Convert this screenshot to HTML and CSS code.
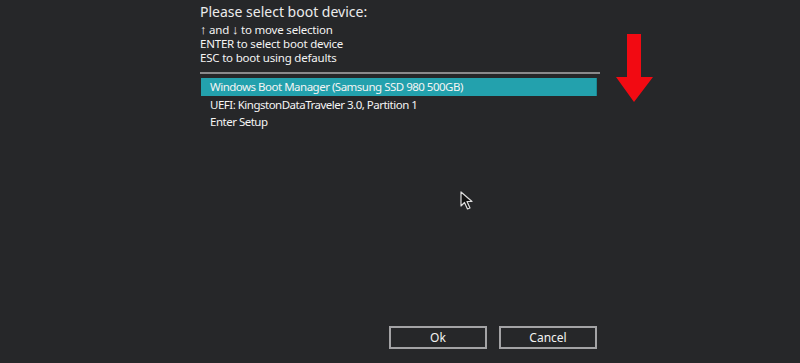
FILE: index.html
```html
<!DOCTYPE html>
<html lang="en">
<head>
    <meta charset="UTF-8">
    <meta name="viewport" content="width=device-width, initial-scale=1.0">
    <title>Boot Menu</title>
    <link rel="stylesheet" href="styles.css">
</head>
<body>
    <div class="screen">
        <div class="menu">
            <h1 class="title">Please select boot device:</h1>
            <div class="help">
                <div><span class="key">&uarr;</span> and <span class="key">&darr;</span> to move selection</div>
                <div>ENTER to select boot device</div>
                <div>ESC to boot using defaults</div>
            </div>
            <hr class="separator">
            <ul class="devices">
                <li class="device selected">Windows Boot Manager (Samsung SSD 980 500GB)</li>
                <li class="device">UEFI: KingstonDataTraveler 3.0, Partition 1</li>
                <li class="device">Enter Setup</li>
            </ul>
            <div class="buttons">
                <button class="btn">Ok</button>
                <button class="btn">Cancel</button>
            </div>
        </div>

        <svg class="red-arrow" width="40" height="70" viewBox="0 0 40 70">
            <polygon points="11,0 25,0 25,43 37,43 18,68 0,43 11,43" fill="#f20a12"/>
        </svg>

        <svg class="pointer" width="14" height="20" viewBox="0 0 14 20">
            <path d="M1 1 L1 15 L4.5 11.5 L7.5 18 L10 17 L7 10.5 L12 10.5 Z" fill="#111" stroke="#ddd" stroke-width="1.2" stroke-linejoin="round"/>
        </svg>
    </div>
</body>
</html>
```

FILE: styles.css
```css
* {
    box-sizing: border-box;
}
html, body {
    margin: 0;
    padding: 0;
}
body {
    background-color: #262729;
    font-family: "Noto Sans", "Open Sans", sans-serif;
    color: #f2f2f2;
}
.screen {
    position: relative;
    width: 800px;
    height: 363px;
    overflow: hidden;
}
.menu {
    width: 400px;
    height: 363px;
    margin: 0 auto;
    display: flex;
    flex-direction: column;
}
.title {
    margin: 2px 0 0 0;
    font-size: 14px;
    font-weight: normal;
    line-height: 20px;
    color: #ececec;
}
.help {
    margin-top: 1px;
    font-size: 11.5px;
    letter-spacing: -0.2px;
    line-height: 14px;
    color: #f4f4f4;
}
.key {
    font-family: "Liberation Sans", sans-serif;
    font-size: 13px;
}
.separator {
    margin: 7px 0 4px 0;
    border: none;
    height: 2px;
    background: #8a8a8c;
}
.devices {
    list-style: none;
    margin: 0;
    padding: 0;
}
.device {
    margin-left: 1px;
    width: 396px;
    height: 17px;
    padding-left: 9px;
    font-size: 11.5px;
    letter-spacing: -0.5px;
    line-height: 17px;
    color: #f4f4f4;
}
.device.selected {
    height: 18px;
    line-height: 18px;
    background: #23a1ad;
    border-right: 1px solid #1a8893;
}
.buttons {
    margin-top: auto;
    margin-bottom: 14px;
    display: flex;
    justify-content: flex-end;
    gap: 12px;
    padding-right: 3px;
}
.btn {
    width: 98px;
    height: 23px;
    background: transparent;
    border: 2px solid #a3a3a5;
    color: #f2f2f2;
    font-family: inherit;
    font-size: 12px;
    padding: 0;
}
.red-arrow {
    position: absolute;
    left: 616px;
    top: 34px;
}
.pointer {
    position: absolute;
    left: 460px;
    top: 191px;
}
```
